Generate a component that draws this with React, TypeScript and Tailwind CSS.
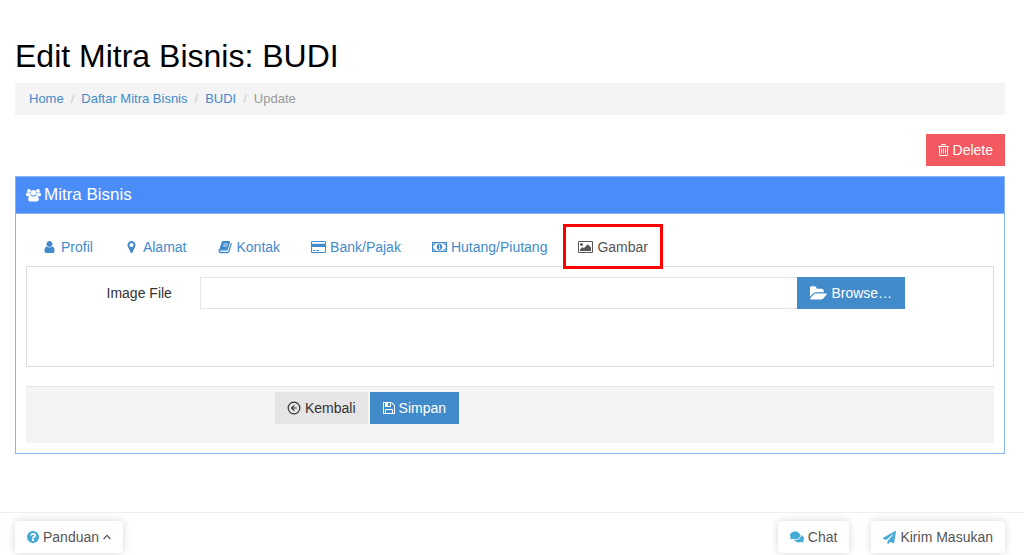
import { ReactNode, useRef, useState } from 'react';
import clsx from 'clsx';
import { CircleArrowLeft } from 'lucide-react';
import { FaComments, FaPaperPlane } from 'react-icons/fa';

type IconProps = { className?: string };

const glyphs = {
  user: {
    box: '256 0 1280 1792',
    d: 'M1536 1399q0 109-62.5 187t-150.5 78h-854q-88 0-150.5-78t-62.5-187q0-85 8.5-160.5t31.5-152 58.5-131 94-89 134.5-34.5q131 128 313 128t313-128q76 0 134.5 34.5t94 89 58.5 131 31.5 152 8.5 160.5zm-256-887q0 159-112.5 271.5t-271.5 112.5-271.5-112.5-112.5-271.5 112.5-271.5 271.5-112.5 271.5 112.5 112.5 271.5z',
  },
  marker: {
    box: '384 0 1024 1792',
    d: 'M1152 640q0-106-75-181t-181-75-181 75-75 181 75 181 181 75 181-75 75-181zm256 0q0 109-33 179l-364 774q-16 33-47.5 52t-67.5 19-67.5-19-46.5-52l-365-774q-33-70-33-179 0-212 150-362t362-150 362 150 150 362z',
  },
  card: {
    box: '0 0 1920 1792',
    d: 'M1760 128q66 0 113 47t47 113v1216q0 66-47 113t-113 47h-1600q-66 0-113-47t-47-113v-1216q0-66 47-113t113-47h1600zm-1600 128q-13 0-22.5 9.5t-9.5 22.5v224h1664v-224q0-13-9.5-22.5t-22.5-9.5h-1600zm1600 1280q13 0 22.5-9.5t9.5-22.5v-768h-1664v768q0 13 9.5 22.500t22.500 9.500h1600zm-1504-128v-128h256v128h-256zm384 0v-128h384v128h-384zM96 480h1728v400h-1728z',
  },
  picture: {
    box: '-64 0 1920 1792',
    d: 'M576 576q0 80-56 136t-136 56-136-56-56-136 56-136 136-56 136 56 56 136zm1024 384v448h-1408v-192l320-320 160 160 512-512zm96-704h-1600q-13 0-22.5 9.5t-9.5 22.5v1216q0 13 9.5 22.5t22.5 9.5h1600q13 0 22.5-9.5t9.5-22.5v-1216q0-13-9.5-22.5t-22.5-9.5zm160 32v1216q0 66-47 113t-113 47h-1600q-66 0-113-47t-47-113v-1216q0-66 47-113t113-47h1600q66 0 113 47t47 113z',
  },
  trash: {
    box: '192 0 1408 1792',
    d: 'M704 736v576q0 14-9 23t-23 9h-64q-14 0-23-9t-9-23v-576q0-14 9-23t23-9h64q14 0 23 9t9 23zm256 0v576q0 14-9 23t-23 9h-64q-14 0-23-9t-9-23v-576q0-14 9-23t23-9h64q14 0 23 9t9 23zm256 0v576q0 14-9 23t-23 9h-64q-14 0-23-9t-9-23v-576q0-14 9-23t23-9h64q14 0 23 9t9 23zm128 724v-948h-896v948q0 22 7 40.5t14.5 27 10.5 8.5h832q3 0 10.5-8.5t14.5-27 7-40.5zm-672-1076h448l-48-117q-7-9-17-11h-317q-10 2-17 11zm928 32v64q0 14-9 23t-23 9h-96v948q0 83-47 143.5t-113 60.5h-832q-66 0-113-58.5t-47-141.5v-952h-96q-14 0-23-9t-9-23v-64q0-14 9-23t23-9h309l70-167q15-37 54-63t79-26h320q40 0 79 26t54 63l70 167h309q14 0 23 9t9 23z',
  },
  folder: {
    box: '0 100 1820 1500',
    d: 'M1815 952q0 31-31 66l-336 396q-43 51-120.5 86.5t-143.5 35.5h-1088q-34 0-60.5-13t-26.5-43q0-31 31-66l336-396q43-51 120.5-86.5t143.5-35.5h1088q34 0 60.5 13t26.5 43zm-343-344v160h-832q-94 0-197 47.5t-164 119.5l-337 396-5 6q0-4-.5-12.5t-.5-12.5v-960q0-92 66-158t158-66h320q92 0 158 66t66 158v32h544q92 0 158 66t66 158z',
  },
  floppy: {
    box: '128 0 1536 1792',
    d: 'M512 1536h768v-384h-768v384zm896 0h128v-896q0-14-10-38.5t-20-34.5l-281-281q-10-10-34-20t-39-10v416q0 40-28 68t-68 28h-576q-40 0-68-28t-28-68v-416h-128v1280h128v-416q0-40 28-68t68-28h832q40 0 68 28t28 68v416zm-384-928v-320q0-13-9.5-22.5t-22.5-9.5h-192q-13 0-22.5 9.5t-9.5 22.5v320q0 13 9.5 22.5t22.5 9.5h192q13 0 22.5-9.5t9.5-22.5zm640 32v928q0 40-28 68t-68 28h-1344q-40 0-68-28t-28-68v-1344q0-40 28-68t68-28h928q40 0 88 20t76 48l280 280q28 28 48 76t20 88z',
  },
  question: {
    box: '128 0 1536 1792',
    d: 'M1024 1376v-192q0-14-9-23t-23-9h-192q-14 0-23 9t-9 23v192q0 14 9 23t23 9h192q14 0 23-9t9-23zm256-672q0-88-55.5-163t-138.5-116-170-41q-243 0-371 213-15 24 8 42l132 100q7 6 19 6 16 0 25-12 53-68 86-92 34-24 86-24 48 0 85.5 26t37.5 59q0 38-20 61t-68 45q-63 28-115.5 86.5t-52.5 125.5v36q0 14 9 23t23 9h192q14 0 23-9t9-23q0-19 21.5-49.5t54.5-49.5q32-18 49-28.5t46-35 44.5-48 28-60.5 12.5-81zm384 192q0 209-103 385.5t-279.5 279.5-385.5 103-385.5-103-279.5-279.5-103-385.5 103-385.5 279.5-279.5 385.5-103 385.5 103 279.5 279.5 103 385.5z',
  },
};

function Glyph({ name, className }: { name: keyof typeof glyphs; className?: string }) {
  return (
    <svg viewBox={glyphs[name].box} fill="currentColor" aria-hidden="true" className={clsx('h-[14px] shrink-0', className)}>
      <path d={glyphs[name].d} />
    </svg>
  );
}

function BookIcon({ className }: IconProps) {
  return (
    <svg viewBox="0 0 14 14" fill="none" stroke="currentColor" aria-hidden="true" className={className}>
      <path d="M4.4 1.5h7.3L9.2 10H1.6z" fill="currentColor" strokeLinejoin="round" />
      <path d="M1.4 9.6c-.6 1.6.1 2.9 1.3 2.9h6.9c.6 0 1-.3 1.2-.9l2.4-8" strokeWidth="1.3" strokeLinecap="round" />
      <path d="M5.6 4h4.2M5 6h4.2" stroke="#fff" strokeWidth="0.8" />
    </svg>
  );
}

function MoneyIcon({ className }: IconProps) {
  return (
    <svg viewBox="0 0 15 12" fill="none" stroke="currentColor" aria-hidden="true" className={className}>
      <rect x="0.6" y="1.6" width="13.8" height="8.8" strokeWidth="1.2" />
      <ellipse cx="7.5" cy="6" rx="2.4" ry="2.8" fill="currentColor" />
      <path d="M6.8 4.6l.8-.5v3.6M6.4 7.700h2.300" stroke="#fff" strokeWidth="0.8" />
      <path d="M1 4.1A2.2 2.2 0 0 0 3.2 2M14 4.1A2.2 2.2 0 0 1 11.8 2M1 7.9A2.2 2.2 0 0 1 3.2 10M14 7.9A2.2 2.2 0 0 0 11.8 10" />
    </svg>
  );
}

function GroupIcon({ className }: IconProps) {
  return (
    <svg viewBox="0 0 15 14" fill="currentColor" aria-hidden="true" className={className}>
      <circle cx="3" cy="2.9" r="1.9" />
      <circle cx="12" cy="2.9" r="1.9" />
      <circle cx="7.5" cy="4.7" r="2.7" />
      <path d="M1.3 4.4c.9.8 2 .9 3 .5 0 1 .4 1.7 1 2.3-1 .1-1.7.4-2.3 1H1.5C.6 8.2 0 7.8 0 7c0-1.2.3-2.6 1.3-2.6z" />
      <path d="M13.7 4.4c-.9.8-2 .9-3 .5 0 1-.4 1.7-1 2.3 1 .1 1.7.4 2.3 1h1.5c.9 0 1.5-.4 1.5-1.2 0-1.2-.3-2.6-1.3-2.6z" />
      <path d="M4.7 7.5c1.7 1.3 3.9 1.3 5.6 0 1.7 0 2.5 1.8 2.5 4 0 1.2-.8 1.9-1.9 1.9H4.1c-1.1 0-1.9-.7-1.9-1.9 0-2.2.8-4 2.500-4z" />
    </svg>
  );
}

function AngleUp({ className }: IconProps) {
  return (
    <svg viewBox="0 0 8 6" fill="none" stroke="currentColor" strokeWidth="1.2" aria-hidden="true" className={className}>
      <path d="M0.600 5L4 1.400 7.400 5" />
    </svg>
  );
}

const tabs: { label: string; icon: ReactNode }[] = [
  { label: 'Profil', icon: <Glyph name="user" className="w-[11px]" /> },
  { label: 'Alamat', icon: <Glyph name="marker" className="w-[9px]" /> },
  { label: 'Kontak', icon: <BookIcon className="size-[14px]" /> },
  { label: 'Bank/Pajak', icon: <Glyph name="card" className="w-[15px]" /> },
  { label: 'Hutang/Piutang', icon: <MoneyIcon className="h-[12px] w-[15px]" /> },
  { label: 'Gambar', icon: <Glyph name="picture" className="w-[15px]" /> },
];

const crumbs = ['Home', 'Daftar Mitra Bisnis', 'BUDI'];

const floating = 'flex h-8 cursor-pointer items-center gap-1 rounded bg-white px-3 text-[#555] shadow-[0_0_8px_rgba(0,0,0,0.16)]';

export default function App() {
  const [active, setActive] = useState('Gambar');
  const [fileName, setFileName] = useState('');
  const fileRef = useRef<HTMLInputElement>(null);

  return (
    <div className="flex min-h-screen flex-col bg-white font-['Liberation_Sans',Arial,sans-serif] text-[14px] leading-5 text-[#333]">
      <main className="flex-1 pr-[19px] pl-[15px] pt-9 pb-4">
        <h1 className="text-[32px] leading-10 text-black">Edit Mitra Bisnis: BUDI</h1>

        <nav aria-label="Breadcrumb" className="mt-[7px] bg-[#f4f4f4] px-[14px] py-[6px] text-[13px]">
          <ol className="flex">
            {crumbs.map((crumb) => (
              <li key={crumb}>
                <a href="#" className="text-[#428bca]">{crumb}</a>
                <span className="px-[7px] text-[#ccc]">/</span>
              </li>
            ))}
            <li className="text-[#999]">Update</li>
          </ol>
        </nav>

        <div className="mt-[19px] flex justify-end">
          <button type="button" className="flex h-8 cursor-pointer items-center gap-1 bg-[#f45860] px-3 text-white">
            <Glyph name="trash" className="w-[11px]" />
            Delete
          </button>
        </div>

        <section className="mt-[10px] border border-[#8ab4f5]">
          <h2 className="flex h-[37px] items-center gap-[3px] border-b border-[#8ab4f5] bg-[#4b8df8] px-[10px] text-[17px] text-white">
            <GroupIcon className="h-[14px] w-[15px]" />
            Mitra Bisnis
          </h2>

          <form className="p-[10px] pt-0" onSubmit={(e) => e.preventDefault()}>
            <div role="tablist" className="flex gap-px pt-[10px] pl-px">
              {tabs.map((tab) => (
                <a
                  key={tab.label}
                  href="#"
                  role="tab"
                  aria-selected={active === tab.label}
                  onClick={() => setActive(tab.label)}
                  className={clsx(
                    'relative z-10 -mb-[3px] flex h-[45px] items-center gap-1 border-[3px] px-3',
                    active === tab.label ? 'border-[#f00] bg-white text-[#555]' : 'border-transparent text-[#428bca]'
                  )}
                >
                  <span className="flex w-[15px] justify-center">{tab.icon}</span>
                  {tab.label}
                </a>
              ))}
            </div>

            <div role="tabpanel" className="flex min-h-[101px] items-start border border-[#ddd] py-[10px]">
              <label htmlFor="image-file" className="w-[15%] py-[6px] text-right">Image File</label>
              <div className="ml-7 flex w-[73%]">
                <input
                  id="image-file"
                  type="text"
                  readOnly
                  value={fileName}
                  className="h-8 min-w-0 flex-1 border border-r-0 border-[#e5e5e5] px-3 outline-none"
                />
                <button
                  type="button"
                  onClick={() => fileRef.current?.click()}
                  className="flex h-8 cursor-pointer items-center gap-1 bg-[#428bca] px-[13px] text-white"
                >
                  <Glyph name="folder" className="w-[17px]" />
                  Browse…
                </button>
                <input
                  ref={fileRef}
                  type="file"
                  accept="image/*"
                  aria-label="Image File"
                  className="hidden"
                  onChange={(e) => setFileName(e.target.files?.[0]?.name ?? '')}
                />
              </div>
            </div>

            <div className="mt-[19px] border-t border-[#e5e5e5] bg-[#f4f4f4] pt-[5px] pb-[19px]">
              <div className="ml-[25%] flex gap-[2px] px-[7px]">
                <button type="button" className="flex h-8 cursor-pointer items-center gap-1 bg-[#e5e5e5] px-3 text-[#333]">
                  <CircleArrowLeft className="size-[14px]" />
                  Kembali
                </button>
                <button type="submit" className="flex h-8 cursor-pointer items-center gap-1 bg-[#428bca] px-[13px] text-white">
                  <Glyph name="floppy" className="w-[12px]" />
                  Simpan
                </button>
              </div>
            </div>
          </form>
        </section>
      </main>

      <footer className="flex border-t border-[#eee] bg-white pt-2 pr-[19px] pb-[2px] pl-[15px]">
        <button type="button" className={floating}>
          <Glyph name="question" className="w-[12px] text-[#45abd7]" />
          Panduan
          <AngleUp className="h-[6px] w-[8px]" />
        </button>
        <div className="ml-auto flex gap-[22px]">
          <button type="button" className={floating}>
            <FaComments className="size-[14px] text-[#45abd7]" />
            Chat
          </button>
          <button type="button" className={floating}>
            <FaPaperPlane className="size-[13px] text-[#45abd7]" />
            Kirim Masukan
          </button>
        </div>
      </footer>
    </div>
  );
}
